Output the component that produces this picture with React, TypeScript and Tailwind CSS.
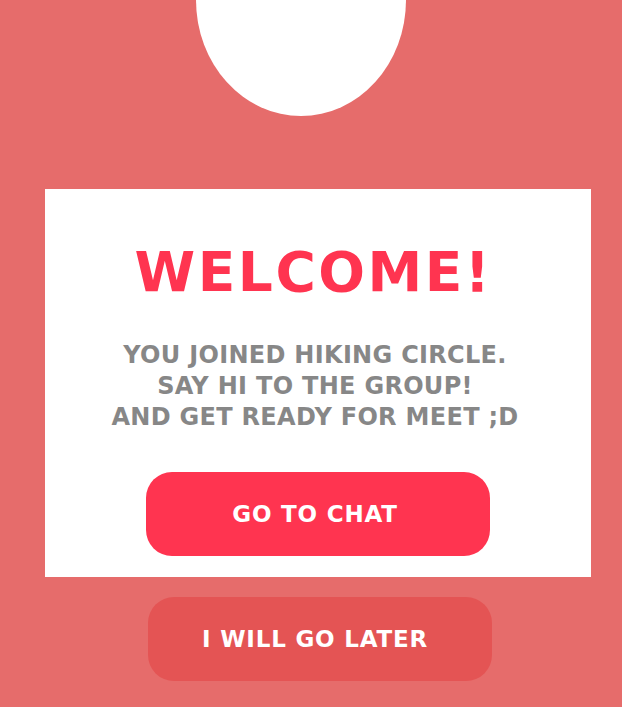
export default function App() {
  return (
    <div
      className="w-[622px] h-[707px] overflow-hidden bg-[#e66c6b] flex flex-col"
      style={{ fontFamily: "'DejaVu Sans', 'Liberation Sans', sans-serif" }}
    >
      <div className="mt-[-116px] w-[210px] h-[232px] shrink-0 rounded-[50%] bg-white ml-[196px]" />

      <div className="mt-[73px] ml-[45px] w-[546px] h-[388px] shrink-0 bg-white flex flex-col items-center">
        <h1 className="mt-[53px] mr-[9px] text-[55px] leading-[60px] font-bold text-[#ff3450] tracking-[2.5px]">
          WELCOME!
        </h1>
        <p className="mt-[38px] mr-[6px] text-[24px] leading-[31px] font-bold text-[#878787] text-center tracking-[0.3px]">
          YOU JOINED HIKING CIRCLE.
          <br />
          SAY HI TO THE GROUP!
          <br />
          AND GET READY FOR MEET ;D
        </p>
        <button
          type="button"
          className="mt-[39px] w-[344px] h-[84px] rounded-[26px] bg-[#ff3450] text-white text-[23px] font-bold tracking-[0.8px]"
        >
          <span className="mr-[6px]">GO TO CHAT</span>
        </button>
      </div>

      <button
        type="button"
        className="mt-[20px] ml-[148px] w-[344px] h-[84px] shrink-0 rounded-[26px] bg-[#e45454] text-white text-[23px] font-bold tracking-[0.8px]"
      >
        <span className="mr-[10px]">I WILL GO LATER</span>
      </button>
    </div>
  );
}
